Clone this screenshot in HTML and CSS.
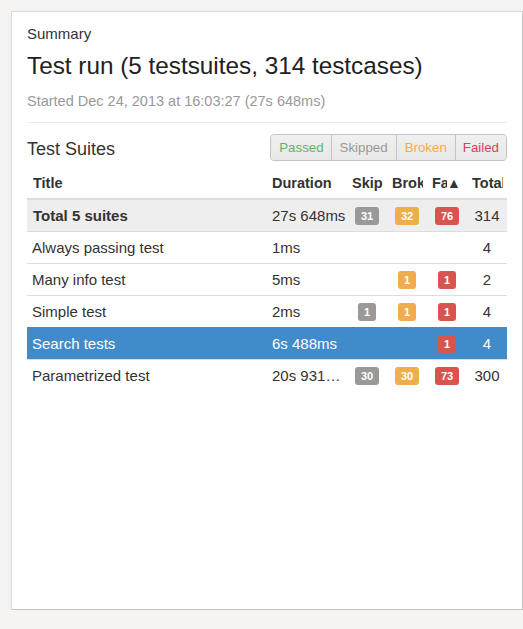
FILE: index.html
```html
<!DOCTYPE html>
<html>
<head>
<meta charset="utf-8">
<link rel="stylesheet" href="styles.css">
</head>
<body>
<div class="card">
  <div class="eyebrow">Summary</div>
  <h1 class="title">Test run (5 testsuites, 314 testcases)</h1>
  <div class="started">Started Dec 24, 2013 at 16:03:27 (27s 648ms)</div>
  <hr class="rule">
  <div class="suites-head">
    <h2 class="suites-title">Test Suites</h2>
    <div class="btn-group">
      <span class="btn passed">Passed</span>
      <span class="btn skipped">Skipped</span>
      <span class="btn broken">Broken</span>
      <span class="btn failed">Failed</span>
    </div>
  </div>
  <table class="tbl">
    <colgroup>
      <col class="c-title"><col class="c-dur"><col class="c-num"><col class="c-num"><col class="c-num"><col class="c-num">
    </colgroup>
    <thead>
      <tr>
        <th><span class="th-in">Title</span></th>
        <th><span class="th-in">Duration</span></th>
        <th><span class="th-in">Skipped</span></th>
        <th><span class="th-in">Broken</span></th>
        <th><span class="th-in sorted"><span class="th-label">Failed</span><span class="arrow">▲</span></span></th>
        <th><span class="th-in">Total</span></th>
      </tr>
    </thead>
    <tbody>
      <tr class="total">
        <td>Total 5 suites</td><td class="dur-free">27s 648ms</td>
        <td class="n"><span class="badge gray">31</span></td>
        <td class="n"><span class="badge orange">32</span></td>
        <td class="n"><span class="badge red">76</span></td>
        <td class="n">314</td>
      </tr>
      <tr>
        <td>Always passing test</td><td>1ms</td>
        <td class="n"></td><td class="n"></td><td class="n"></td><td class="n">4</td>
      </tr>
      <tr>
        <td>Many info test</td><td>5ms</td>
        <td class="n"></td>
        <td class="n"><span class="badge orange">1</span></td>
        <td class="n"><span class="badge red">1</span></td>
        <td class="n">2</td>
      </tr>
      <tr>
        <td>Simple test</td><td>2ms</td>
        <td class="n"><span class="badge gray">1</span></td>
        <td class="n"><span class="badge orange">1</span></td>
        <td class="n"><span class="badge red">1</span></td>
        <td class="n">4</td>
      </tr>
      <tr class="active">
        <td>Search tests</td><td>6s 488ms</td>
        <td class="n"></td><td class="n"></td>
        <td class="n"><span class="badge red">1</span></td>
        <td class="n">4</td>
      </tr>
      <tr class="last">
        <td>Parametrized test</td><td>20s 931ms</td>
        <td class="n"><span class="badge gray">30</span></td>
        <td class="n"><span class="badge orange">30</span></td>
        <td class="n"><span class="badge red">73</span></td>
        <td class="n">300</td>
      </tr>
    </tbody>
  </table>
</div>
</body>
</html>
```
FILE: styles.css
```css
html, body {
  margin: 0;
  padding: 0;
  background: #f5f4f2;
}
body {
  font-family: "Liberation Sans", Arial, sans-serif;
  color: #333;
  padding: 11px 0 0 11px;
}
.card {
  box-sizing: border-box;
  width: 512px;
  height: 599px;
  background: #fff;
  border: 1px solid #ddd;
  border-right-color: #c8c8c8;
  border-bottom-color: #c4c4c4;
  box-shadow: 1px 2px 6px rgba(0, 0, 0, 0.08);
  padding: 13px 15px 15px 15px;
}
.eyebrow {
  font-size: 15px;
  line-height: 18px;
}
.title {
  font-size: 24.3px;
  font-weight: normal;
  line-height: 28px;
  margin: 9px 0 0 0;
  color: #222;
}
.started {
  font-size: 14.5px;
  color: #999;
  line-height: 20px;
  margin-top: 11px;
}
.rule {
  border: 0;
  border-top: 1px solid #eee;
  margin: 11px 0 0 0;
}
.suites-head {
  display: flex;
  justify-content: space-between;
  align-items: center;
  margin-top: 11px;
}
.suites-title {
  font-size: 18px;
  font-weight: normal;
  margin: 0;
  line-height: 22px;
  padding-top: 3px;
}
.btn-group {
  display: flex;
  border: 1px solid #c4c4c4;
  border-radius: 4px;
  overflow: hidden;
  background: #ececec;
}
.btn {
  font-size: 13.3px;
  line-height: 25px;
  padding: 0 8px;
  border-left: 1px solid #c4c4c4;
  background: linear-gradient(#f0f0f0, #e8e8e8);
}
.btn:first-child { border-left: 0; }
.passed { color: #5cb85c; padding: 0 7px 0 8px; }
.skipped { color: #999; }
.broken { color: #f0ad4e; }
.failed { color: #dc3f55; padding: 0 7px; }
.tbl {
  width: 480px;
  table-layout: fixed;
  border-collapse: collapse;
  margin-top: 7px;
  font-size: 15px;
}
.c-title { width: 240px; }
.c-dur { width: 80px; }
.c-num { width: 40px; }
.tbl th {
  text-align: left;
  font-weight: bold;
  font-size: 14.5px;
  padding: 6px 4px 6px 5px;
  line-height: 18px;
  height: 18px;
  border-bottom: 2px solid #ddd;
}
.th-in {
  display: block;
  white-space: nowrap;
  overflow: hidden;
  text-overflow: clip;
}
.tbl th:first-child { padding-left: 6px; }
.th-in.sorted { display: flex; }
.th-label {
  width: 15px;
  overflow: hidden;
  flex: none;
}
.arrow {
  font-size: 14px;
  flex: none;
}
.tbl td {
  padding: 7px 5px 6px 5px;
  line-height: 18px;
  height: 18px;
  border-top: 1px solid #ddd;
  white-space: nowrap;
  overflow: hidden;
  text-overflow: ellipsis;
}
.tbl td.dur-free { overflow: visible; text-overflow: clip; }
.tbl td.n { text-align: center; padding: 7px 0 6px 0; }
.tbl tr.total td { background: #eee; }
.tbl tr.total td:first-child { font-weight: bold; padding-left: 6px; }
.tbl tr.active td { background: #428bca; color: #fff; border-top-color: #428bca; }
.badge {
  display: inline-block;
  padding: 0 6px;
  font-size: 11px;
  font-weight: bold;
  line-height: 18px;
  color: #fff;
  border-radius: 3px;
  vertical-align: top;
}
.gray { background: #999; }
.orange { background: #f0ad4e; }
.red { background: #d9534f; }
```
